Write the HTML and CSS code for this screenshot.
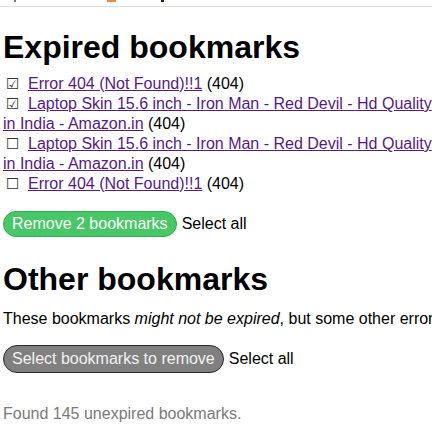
FILE: index.html
```html
<!DOCTYPE html>
<html>
<head>
<meta charset="utf-8">
<link rel="stylesheet" href="styles.css">
</head>
<body>
<div class="top">
  <div class="frags"><span class="f1"></span><span class="f2"></span><span class="f3"></span></div>
</div>
<main class="page">
  <h1 class="title">Expired bookmarks</h1>
  <ul class="list">
    <li><span class="box">☑</span><a href="#">Error 404 (Not Found)!!1</a> (404)</li>
    <li><span class="box">☑</span><a href="#">Laptop Skin 15.6 inch - Iron Man - Red Devil - Hd Quality in India - Amazon.in</a> (404)</li>
    <li><span class="box">☐</span><a href="#">Laptop Skin 15.6 inch - Iron Man - Red Devil - Hd Quality in India - Amazon.in</a> (404)</li>
    <li><span class="box">☐</span><a href="#">Error 404 (Not Found)!!1</a> (404)</li>
  </ul>
  <div class="actions first">
    <button class="btn btn-green">Remove 2 bookmarks</button>
    <span class="select">Select all</span>
  </div>
  <h2 class="title other">Other bookmarks</h2>
  <p class="note">These bookmarks <em>might not be expired</em>, but some other error occurred while checking them.</p>
  <div class="actions">
    <button class="btn btn-gray">Select bookmarks to remove</button>
    <span class="select">Select all</span>
  </div>
  <p class="found">Found 145 unexpired bookmarks.</p>
</main>
</body>
</html>
```
FILE: styles.css
```css
html, body {
  margin: 0;
  padding: 0;
  background: #fff;
  overflow: hidden;
}
body {
  font-family: "Liberation Sans", Arial, sans-serif;
  font-size: 16px;
  color: #000;
  width: 432px;
}
.top {
  height: 6px;
  border-bottom: 1px solid #dcdcdc;
}
.frags {
  display: flex;
  height: 2px;
}
.frags span { display: block; height: 2px; }
.f1 { width: 2px; margin-left: 14px; background: #777; }
.f2 { width: 9px; margin-left: 91px; background: #e88a4a; }
.f3 { width: 3px; margin-left: 45px; background: #1a1a4a; }
.page {
  padding-left: 3px;
  width: 433px;
}
.title {
  font-size: 32px;
  font-weight: bold;
  margin: 22px 0 8px;
  line-height: 37px;
}
.list {
  list-style: none;
  margin: 0;
  padding: 0;
}
.list li {
  line-height: 20px;
}
.box {
  display: inline-block;
  width: 25px;
  padding-left: 3px;
  box-sizing: border-box;
  font-family: "DejaVu Sans", sans-serif;
  font-size: 15px;
  color: #333;
}
a {
  color: #551a8b;
  text-decoration: underline;
}
.actions {
  display: flex;
  align-items: center;
  gap: 5px;
  margin-top: 17px;
}
.btn {
  font-family: "Liberation Sans", Arial, sans-serif;
  font-size: 16px;
  border-radius: 14px;
  line-height: 18px;
  cursor: pointer;
}
.btn-green {
  background: #48c766;
  border: 1px solid #30ad4c;
  color: #fff;
  padding: 3px 8px;
}
.btn-gray {
  background: #808080;
  border: 1px solid #2a2a2a;
  color: #f2f2f2;
  padding: 4px 8px;
}
.other {
  margin-top: 24px;
  margin-bottom: 12px;
}
.note {
  margin: 0;
  white-space: nowrap;
}
.found {
  margin: 32px 0 0;
  color: #7a7a7a;
}
```
